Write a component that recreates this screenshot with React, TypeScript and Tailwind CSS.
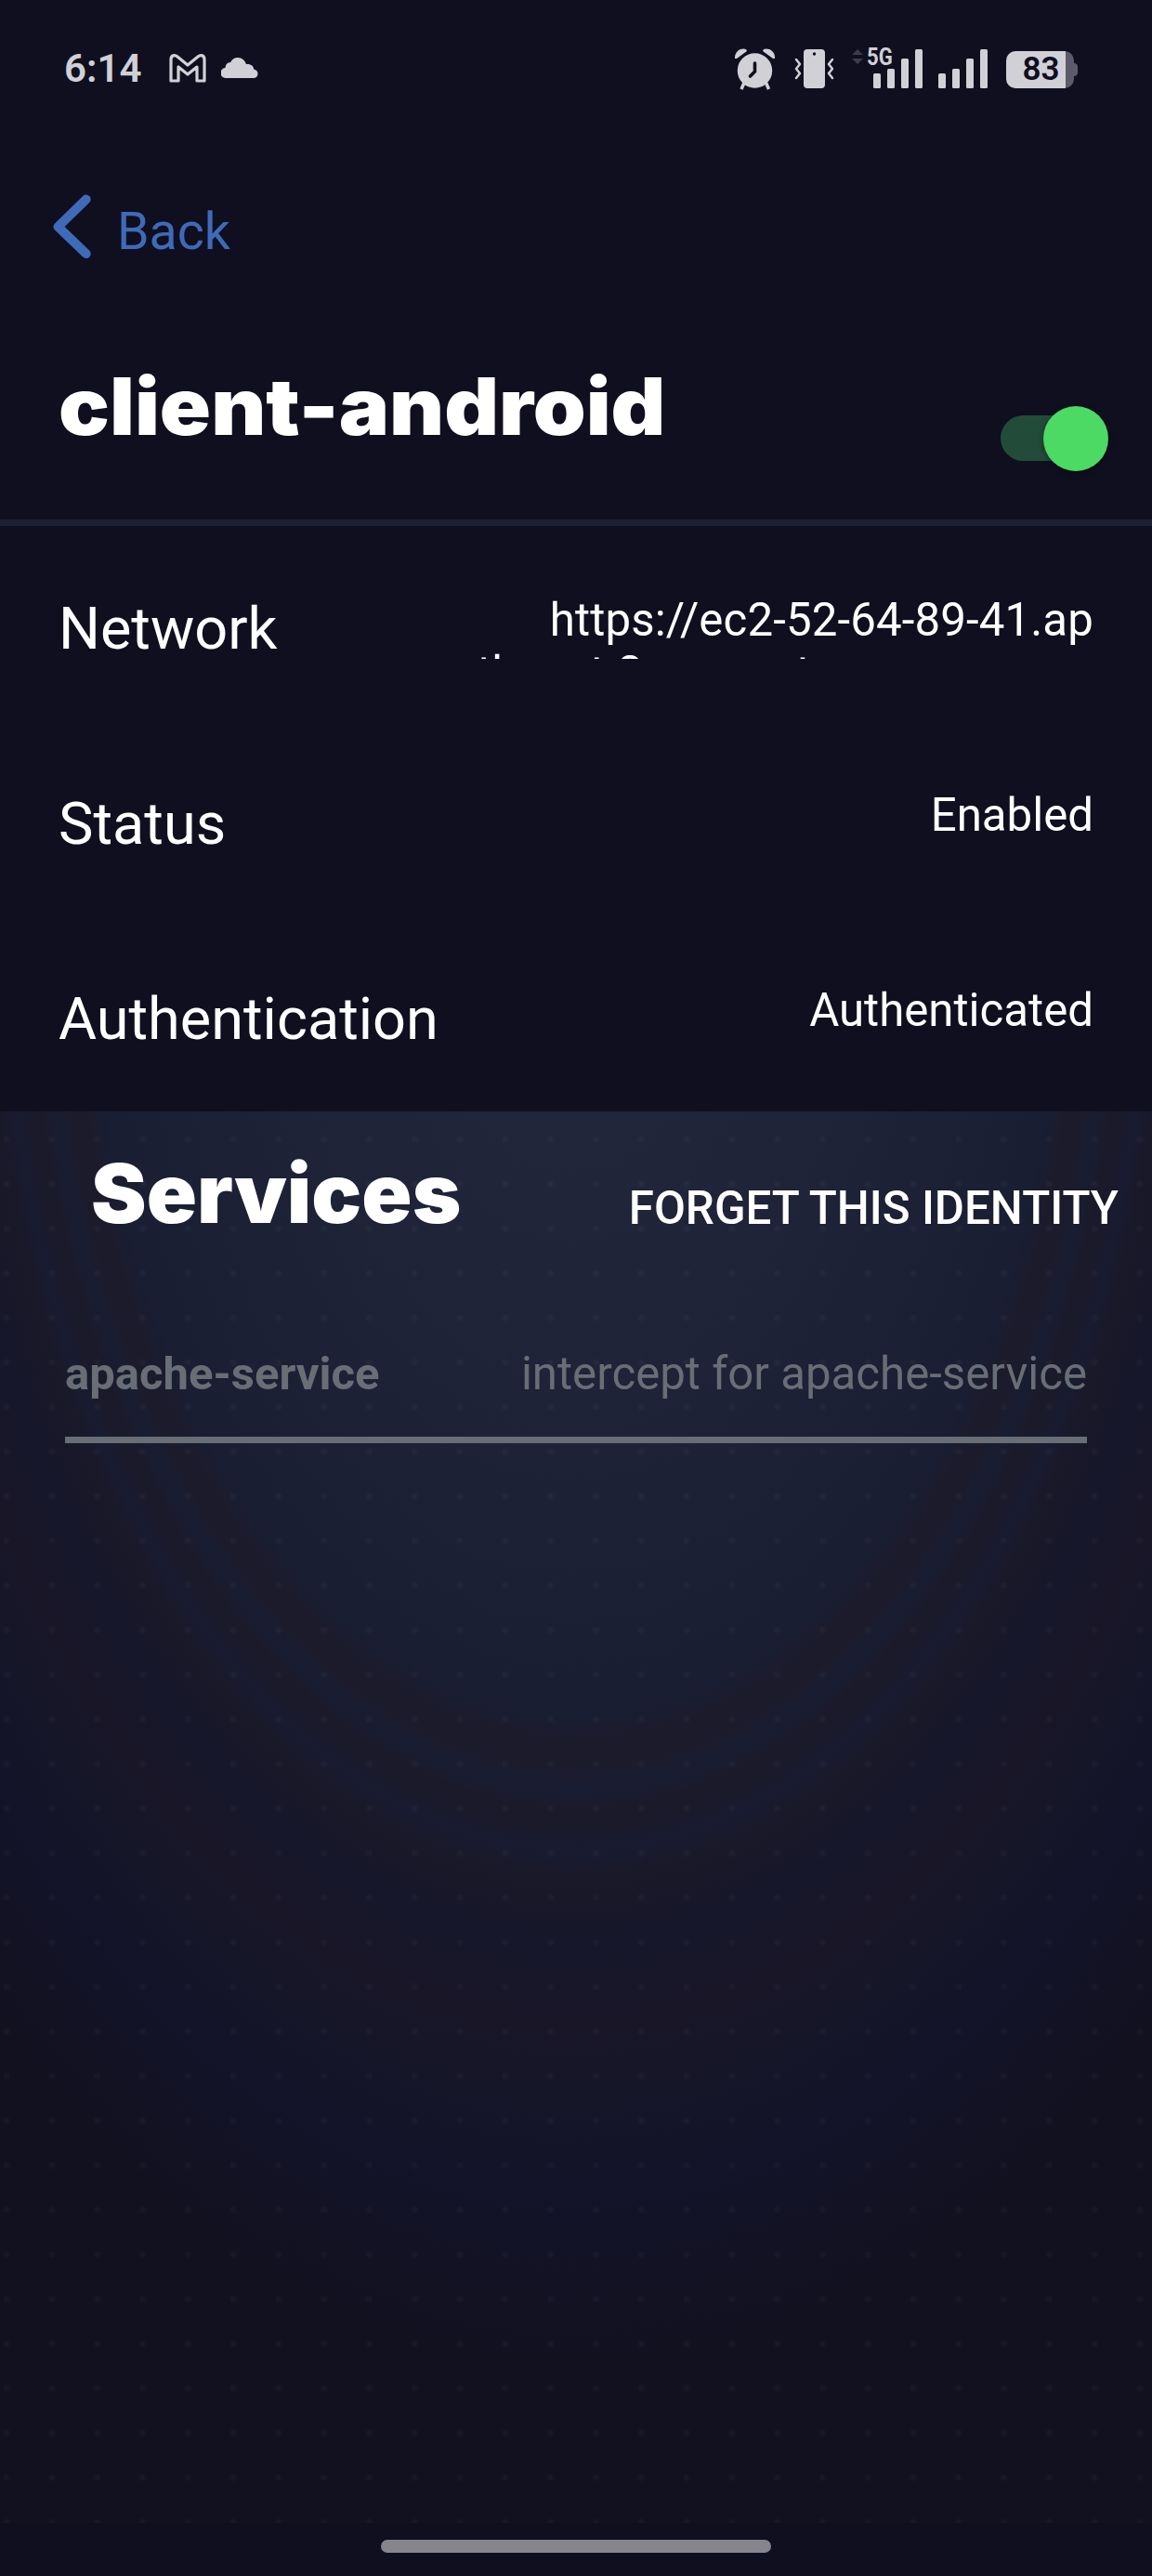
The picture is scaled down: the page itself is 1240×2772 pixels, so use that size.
import React from "react";

const bars = [
  [0, 16],
  [15, 21],
  [30, 32],
  [45, 42],
];

function Signal() {
  return (
    <svg width="53" height="42" viewBox="0 0 53 42" fill="#d0d0d6">
      {bars.map(([x, h]) => (
        <rect key={x} x={x} y={42 - h} width="8" height={h} rx="1.5" />
      ))}
    </svg>
  );
}

function StatusBar() {
  return (
    <header className="flex h-[148px] w-full shrink-0 items-start pl-[69px] text-[#d0d0d6]">
      <span className="mt-[49px] w-[113px] text-[42px] leading-[50px] font-semibold">6:14</span>
      <svg className="mt-[58px]" width="40" height="32" viewBox="0 0 40 32" fill="none" stroke="#d0d0d6" strokeWidth="3.2" strokeLinejoin="round">
        <path d="M2 29V6C2 1.500 6 .5 9 3L20 12L31 3C34 .5 38 1.500 38 6V29H30V14L20 22L10 14V29Z" />
      </svg>
      <svg className="mt-[62px] ml-[16px]" width="40" height="22" viewBox="0 0 40 22" fill="#d0d0d6">
        <path d="M5.500 22A5.500 5.500 0 0 1 4.500 11C5 6.500 7.500 5 10 5.200C12 1.500 14.500 0 18 0C22.500 0 25.500 3 27 7C32 6.500 35 9 35.200 12.500C38 13 39.500 15 39.500 17.500C39.500 20 37.500 22 35 22Z" />
      </svg>
      <svg className="mt-[52px] ml-[513px]" width="44" height="45" viewBox="0 0 44 45" fill="#d0d0d6">
        <circle cx="21.500" cy="24" r="18.700" />
        <path d="M0 11C-.5 3 7 -1 12 1L13 3L2 11ZM43 11C44 3 36 -1 31 1L30 3L41 11Z" />
        <path d="M10 37L7 44M33.500 37L36.500 44" stroke="#d0d0d6" strokeWidth="3.500" />
        <path d="M21.500 16V25L16.500 30" fill="none" stroke="#0f0f20" strokeWidth="3.600" strokeLinecap="round" strokeLinejoin="round" />
      </svg>
      <svg className="mt-[53px] ml-[20px]" width="44" height="43" viewBox="0 0 44 43" fill="#d0d0d6">
        <rect x="10" width="23" height="42" rx="4" />
        <circle cx="21.500" cy="5" r="1.700" fill="#0f0f20" />
        <path d="M2 11L6 16L2 21L6 26L2 31M41 11L37 16L41 21L37 26L41 31" fill="none" stroke="#d0d0d6" strokeWidth="2.500" strokeLinejoin="round" strokeLinecap="round" />
      </svg>
      <svg className="mt-[53px] ml-[17px]" width="14" height="17" viewBox="0 0 14 17" fill="#3b3b4b">
        <path d="M7 0L13 6H1ZM7 16L13 10H1Z" />
      </svg>
      <div className="relative mt-[53px] ml-[10px]">
        <Signal />
        <span className="absolute top-[-4px] left-[-7px] origin-left scale-x-[0.85] text-[26px] leading-[25px] font-bold">5G</span>
      </div>
      <div className="mt-[53px] ml-[17px]">
        <Signal />
      </div>
      <div className="mt-[55px] ml-[20px] flex items-center">
        <div className="flex h-10 w-[73px] items-center justify-center overflow-hidden rounded-[10px] bg-[linear-gradient(90deg,#d0d0d6_64px,#5c5b6b_64px)] pl-[2px] text-[35px] leading-10 font-semibold text-[#0f0f20]">
          83
        </div>
        <div className="h-[14px] w-1 rounded-r-sm bg-[#5c5b6b]" />
      </div>
    </header>
  );
}

function Row({ label, children }: { label: string; children: React.ReactNode }) {
  return (
    <div className="flex h-[210px] items-start justify-between pr-[63px] pl-[63px] text-white">
      <span className="text-[63px] leading-[76px]">{label}</span>
      <div className="h-[70px] overflow-hidden text-right text-[49.2px] leading-[56.5px]">{children}</div>
    </div>
  );
}

export default function App() {
  return (
    <main className="flex h-[2772px] w-[1240px] flex-col overflow-hidden bg-[#0f0f20] font-['Roboto',sans-serif]">
      <StatusBar />
      <button className="flex h-[192px] items-start pl-[56px] text-[#3f6ab8]">
        <svg className="mt-[60px]" width="44" height="72" viewBox="0 0 44 72" fill="none" stroke="#3f6ab8" strokeWidth="10" strokeLinecap="round" strokeLinejoin="round">
          <path d="M36.700 6.500L6.500 36L36.700 65" />
        </svg>
        <span className="mt-[69px] ml-[26px] text-[55.5px] leading-[66px]">Back</span>
      </button>
      <section className="flex h-[219px] shrink-0 items-start justify-between pr-[47px] pl-[63px]">
        <h1 className="mt-[48px] origin-left scale-x-[1.072] text-[85px] leading-[100px] font-black whitespace-nowrap text-white font-['Inter',sans-serif]">client-android</h1>
        <div className="mt-[96px] flex h-[71px] w-[116px] items-center">
          <div className="h-[49px] w-[92px] rounded-full bg-[#234b39]" />
          <div className="-ml-[46px] size-[70px] shrink-0 rounded-full bg-[#4cd964] shadow-[0_2px_6px_rgba(0,0,0,.4)]" />
        </div>
      </section>
      <div className="h-[7px] shrink-0 bg-[#1d2033]" />
      <section className="h-[630px] shrink-0 pt-[73px]">
        <Row label="Network">
          <span className="tracking-[0.13px]">https://ec2-52-64-89-41.ap</span>
          <br />
          -southeast-2.compute.amazonaws
        </Row>
        <Row label="Status">Enabled</Row>
        <Row label="Authentication">Authenticated</Row>
      </section>
      <section className="flex flex-1 flex-col bg-[radial-gradient(ellipse_1040px_1680px_at_50%_-196px,#21263a_12%,#1e2337_30%,#1a1f33_46%,#191e32_50%,#1c1b2c_52%,#1c1b2c_53.5%,#191d31_55%,#1b1a2b_56.5%,#1b1a2b_57.5%,#191b30_59%,#1a192a_60.5%,#191829_62%,#17172b_65%,#181627_70%,#161629_75%,#131329_81%,#131223_88%,#12111f_94%)]">
        <div className="flex flex-1 flex-col bg-[radial-gradient(circle_at_24px_24px,rgba(255,255,255,.03)_1px,transparent_5px)] bg-[length:48.8px_48px] bg-[position:-17px_6px]">
          <div className="flex h-[230px] items-start justify-between pr-[36px] pl-[98px] text-white">
            <h2 className="mt-[38px] origin-left scale-x-[1.018] text-[88px] leading-[100px] font-black font-['Inter',sans-serif]">Services</h2>
            <button className="mt-[76px] text-[49.3px] leading-[57px] font-medium">FORGET THIS IDENTITY</button>
          </div>
          <div className="mx-[70px] flex h-[127px] items-start justify-between border-b-[7px] border-[#686d76] text-[49.2px] leading-[57px] text-[#686d76]">
            <span className="mt-[24px] text-[49px] font-bold">apache-service</span>
            <span className="mt-[24px]">intercept for apache-service</span>
          </div>
        </div>
      </section>
      <footer className="flex h-[57px] shrink-0 justify-center bg-[#0f0f20] pt-[18px]">
        <div className="h-[14px] w-[420px] rounded-full bg-[#86858f]" />
      </footer>
    </main>
  );
}
